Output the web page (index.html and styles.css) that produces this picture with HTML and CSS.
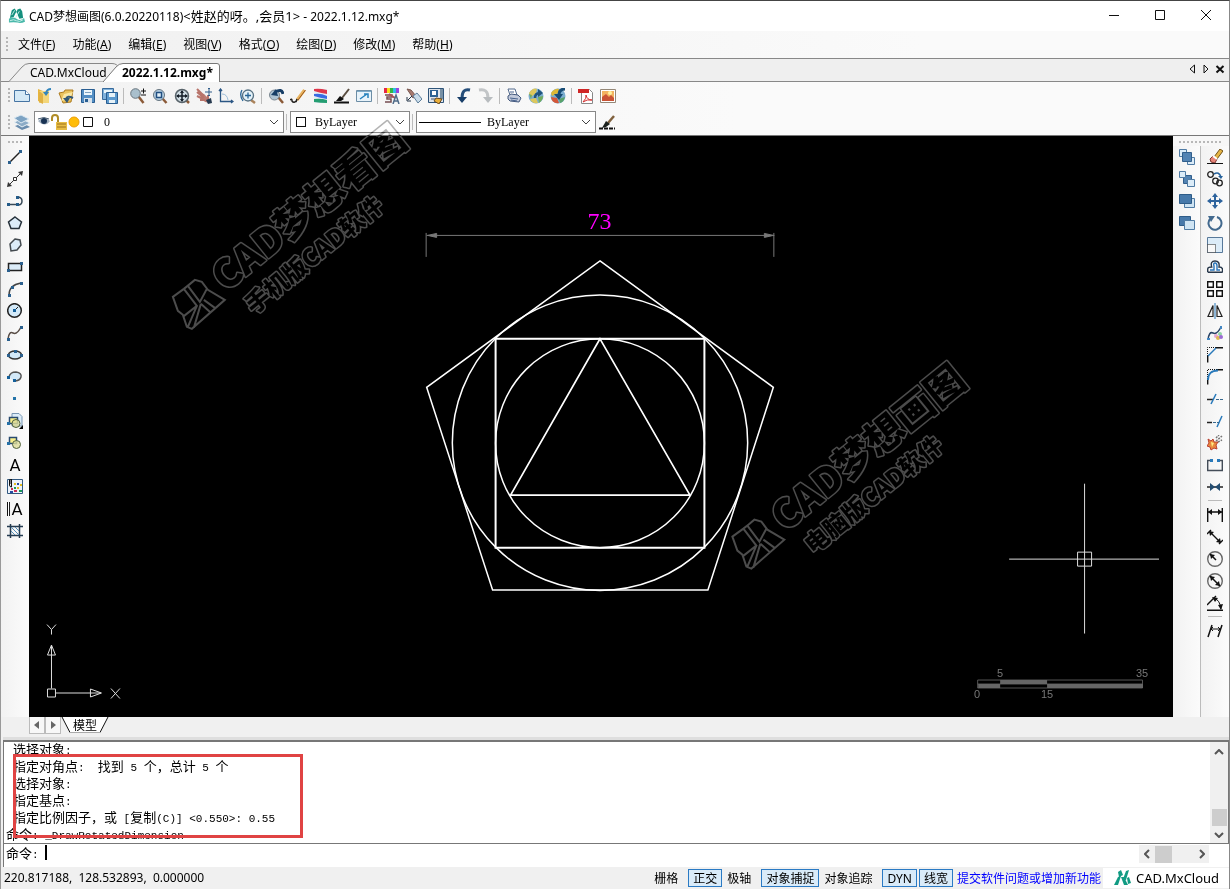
FILE: index.html
```html
<!DOCTYPE html>
<html lang="zh-CN">
<head>
<meta charset="utf-8">
<title>CAD梦想画图</title>
<link rel="stylesheet" href="styles.css">
</head>
<body>
<div class="window">
  <header class="titlebar">
    <svg class="app-logo" viewBox="0 0 18 18"><path d="M4 3l3-2 2 3-3 6-4 1zM10 2l3-1 2 3 1 7-4 1-3-7z" fill="#15907e"/><path d="M1 12q4-3 8 0t8-1l1 4q-4 2-8 1t-9 0z" fill="#49b8aa"/><path d="M4 8l3-5M8 11l4-7M2 14q4-2 7 0t7-1" stroke="#c9efe9"/></svg>
    <h1>CAD梦想画图(6.0.20220118)<span class="user">&lt;姓赵的呀。,会员1&gt;</span> - 2022.1.12.mxg*</h1>
    <div class="window-buttons">
      <button aria-label="最小化"><svg viewBox="0 0 12 12"><path d="M1 5.500h10"/></svg></button>
      <button aria-label="最大化"><svg viewBox="0 0 12 12"><path d="M1.500 .5h9v9h-9z"/></svg></button>
      <button aria-label="关闭"><svg viewBox="0 0 12 12"><path d="M1 0l10 10M11 0L1 10"/></svg></button>
    </div>
  </header>

  <nav class="menubar">
    <span class="grip"></span>
    <button>文件(<u>F</u>)</button>
    <button>功能(<u>A</u>)</button>
    <button>编辑(<u>E</u>)</button>
    <button>视图(<u>V</u>)</button>
    <button>格式(<u>O</u>)</button>
    <button>绘图(<u>D</u>)</button>
    <button>修改(<u>M</u>)</button>
    <button>帮助(<u>H</u>)</button>
  </nav>

  <div class="tabstrip">
    <button class="tab">
      <svg viewBox="0 0 112 19"><path d="M0 18.500L13 4Q16 .5 20 .5H103Q108 .5 110 5V18.500" fill="#f0f0f0" stroke="#888"/></svg>
      <span>CAD.MxCloud</span>
    </button>
    <button class="tab active">
      <svg viewBox="0 0 118 19"><path d="M0 19L13 4Q16 .5 20 .5H114Q116.500 .5 116.500 3V19" fill="#fff" stroke="#777"/></svg>
      <span>2022.1.12.mxg*</span>
    </button>
    <div class="tab-nav">
      <button aria-label="上一个"><svg viewBox="0 0 10 10"><path d="M7.500 1v8L3 5z"/></svg></button>
      <button aria-label="下一个"><svg viewBox="0 0 10 10"><path d="M3 1v8l4-4z"/></svg></button>
      <button aria-label="关闭标签"><svg viewBox="0 0 10 10"><path d="M1.500 2l7 6.500M8.500 2l-7 6.500" stroke-width="2"/></svg></button>
    </div>
  </div>

  <div class="toolbar">
    <span class="grip"></span>
    <button class="tool" aria-label="新建"><svg viewBox="0 0 16 16"><path d="M.5 2.500h11l4 4v7H.5z" fill="#d5e9f6" stroke="#4674a3"/><path d="M11.500 2.500v4h4" fill="#fff" stroke="#4674a3"/></svg></button>
    <button class="tool" aria-label="打开"><svg viewBox="0 0 16 16"><path d="M2 1l5 2v12l-5-2z" fill="#e8b53d"/><path d="M3 3h10v12H3z" fill="#f3d67a"/><path d="M3 3l4 3v10l-4-2z" fill="#dfb144"/><path d="M15 1q-4 0-5 4" stroke="#3285bd" stroke-width="2"/><path d="M7 4l6 0-3 4z" fill="#3285bd"/></svg></button>
    <button class="tool" aria-label="打开图纸"><svg viewBox="0 0 16 16"><path d="M1 5l5-1 1-2h8l-2 12-8 1z" fill="#e9c25d" stroke="#ad7b20"/><path d="M3 13l3-7 9-2-3 7z" fill="#fae7a3"/><path d="M15 10q-6-3-7 1" stroke="#315776" stroke-width="2"/><path d="M5 10l4 5 3-5z" fill="#315776"/></svg></button>
    <button class="tool" aria-label="保存"><svg viewBox="0 0 16 16"><path d="M1.500 1.500h13v13h-13z" fill="#548fc5" stroke="#285d91"/><path d="M4 2h8v5H4z" fill="#edf7fc"/><path d="M5 4.500h6" stroke="#7fa2c0"/><path d="M4 10h8v5H4z" fill="#d7e2eb"/><path d="M5 11h3v3H5z" fill="#285d91"/></svg></button>
    <button class="tool" aria-label="全部保存"><svg viewBox="0 0 16 16"><path d="M.5.5h11v11H.5z" fill="#7fb0da" stroke="#376a9c"/><path d="M2 2h8v3H2z" fill="#eaf5fa"/><path d="M4.500 4.500h11v11h-11z" fill="#5c99cd" stroke="#285d91"/><path d="M7 5h6v4H7zM7 12h6v3H7z" fill="#e7f2f8"/></svg></button>
    <span class="sep"></span>
    <button class="tool" aria-label="缩放"><svg viewBox="0 0 16 16"><path d="M8.500 8.500l5 6.500" stroke="#8b5a38" stroke-width="2.500"/><circle cx="5.500" cy="5.500" r="4.800" fill="#a9bfcc" stroke="#68747d"/><path d="M11 3h5M13.500.5v5M11 7h5" stroke="#111"/></svg></button>
    <button class="tool" aria-label="窗口缩放"><svg viewBox="0 0 16 16"><path d="M10 10l4.500 5" stroke="#8b5a38" stroke-width="2.500"/><circle cx="7" cy="7" r="5.500" fill="#b9d2e4" stroke="#66747f"/><path d="M4.500 4.500h5v5h-5z" fill="#e3f1f9" stroke="#204e80" stroke-width="1.500"/></svg></button>
    <button class="tool" aria-label="范围缩放"><svg viewBox="0 0 16 16"><path d="M12 12l3 3" stroke="#8b5a38" stroke-width="2.500"/><circle cx="8" cy="8" r="6.500" fill="#d0dce3" stroke="#59646b" stroke-width="1.500"/><path d="M8 3v10M3 8h10" stroke="#151e28" stroke-width="1.500"/><path d="M6 5l2-3 2 3zM6 11l2 3 2-3zM5 6L2 8l3 2zM11 6l3 2-3 2z" fill="#151e28"/></svg></button>
    <button class="tool" aria-label="平移"><svg viewBox="0 0 16 16"><path d="M4 5l4 1 3 3 3 6-5-1-4-4z" fill="#bd7c73"/><path d="M1 1l7 7M1 4l7 6M1 8l6 3M4 12l5 0M12 7l0 5" stroke="#b8746b" stroke-width="2"/><path d="M10 12l5-2 1 5-4 1z" fill="#26394f"/><path d="M13 0v8M9 4h7M12 1l1-1 1 1M12 7l1 1 1-1" stroke="#315d8a"/></svg></button>
    <button class="tool" aria-label="坐标系"><svg viewBox="0 0 16 16"><path d="M2.500 1v12.500H15M1 3l1.500-2L4 3M13 12l2 1.500-2 1.500" stroke="#2b5684" stroke-width="1.300"/><path d="M4 6q5 0 6 6" stroke="#9dbed9"/></svg></button>
    <button class="tool" aria-label="实时缩放"><svg viewBox="0 0 16 16"><path d="M11 12l4 3" stroke="#aa835b" stroke-width="2.500"/><circle cx="8" cy="7.500" r="5.500" fill="#e5f2f8" stroke="#567082" stroke-width="1.300"/><path d="M8 4.500v6M5 7.500h6M2 2q-3 5 1 11" stroke="#276495" stroke-width="1.300"/></svg></button>
    <span class="sep"></span>
    <button class="tool" aria-label="上一视图"><svg viewBox="0 0 16 16"><path d="M10 9l5 6" stroke="#8b5a38" stroke-width="2.500"/><circle cx="6.500" cy="7" r="5" fill="#aec3d2" stroke="#7b8790"/><path d="M15 6Q14 0 7 4" stroke="#173e66" stroke-width="3"/><path d="M3 7l5-6 2 7z" fill="#173e66"/></svg></button>
    <button class="tool" aria-label="画笔"><svg viewBox="0 0 16 16"><path d="M14.500 2L7 12" stroke="#e9b460" stroke-width="3"/><path d="M15.500 2L8 12" stroke="#985519"/><path d="M0 12q2-2 2 1 2 3 5-1M7 11l-1 3" stroke="#23201e" stroke-width="1.500"/></svg></button>
    <button class="tool" aria-label="颜色"><svg viewBox="0 0 16 16"><path d="M2 1h13v14H2z" fill="#e6edf3"/><path d="M2 1q5-1 13 1v4Q8 5 2 3z" fill="#df374b"/><path d="M2 6q7-1 13 2v3Q8 10 2 8z" fill="#386be2"/><path d="M2 11q7-1 13 1v3Q8 15 2 14z" fill="#259e72"/></svg></button>
    <button class="tool" aria-label="线宽"><svg viewBox="0 0 16 16"><path d="M15 1L8 10" stroke="#594d40" stroke-width="2"/><path d="M6 8l4 3-3 2H2z" fill="#111"/><path d="M0 14.500h15" stroke="#111" stroke-width="2"/></svg></button>
    <button class="tool" aria-label="全屏"><svg viewBox="0 0 16 16"><path d="M.5 2.500h15v11H.5z" fill="#e8f3fa" stroke="#6c8da5"/><path d="M1 3.500h14" stroke="#7eabc8"/><path d="M4 11l7-5M8 6h4v4" stroke="#2582bd" stroke-width="1.500"/></svg></button>
    <span class="sep"></span>
    <button class="tool" aria-label="文字样式"><svg viewBox="0 0 16 16"><path d="M0 0h3v5H0z" fill="#e82745"/><path d="M3 0h3v5H3z" fill="#f5df1b"/><path d="M6 0h3v5H6z" fill="#31b546"/><path d="M9 0h3v5H9z" fill="#2dbfe3"/><path d="M12 0h3v5h-3z" fill="#9544e0"/><path d="M1 7h7v2H3v2h4v3H1" stroke="#754e51" stroke-width="1.500"/><path d="M5 6l6 4" stroke="#ac5056" stroke-width="2"/><path d="M9 16l3-9 3 9M10 13h4" stroke="#4f6b88" stroke-width="1.500"/></svg></button>
    <button class="tool" aria-label="测量"><svg viewBox="0 0 16 16"><path d="M1 1l4 1 5 6-3 2z" fill="#a97b70" stroke="#78564e"/><path d="M7 8l4-3 5 6-4 4z" fill="#c9dcea" stroke="#5c7d99"/><path d="M6 8l-4 4M1 9v4h4" stroke="#203246"/></svg></button>
    <button class="tool" aria-label="图块"><svg viewBox="0 0 16 16"><path d="M.5.5h15v14H.5z" fill="#dfe5ec" stroke="#2f557a"/><path d="M2 2h8v7H2z" fill="#2d6293"/><path d="M4 3h4v4H4z" fill="#fff"/><path d="M12 1h3v10h-3z" fill="#7790a5"/><path d="M3 11h4" stroke="#456"/><path d="M8 10l6 1-3 5-5-3z" fill="#eab03b" stroke="#664620"/></svg></button>
    <span class="sep"></span>
    <button class="tool" aria-label="撤销"><svg viewBox="0 0 16 16"><path d="M14 2Q6 0 6 10" stroke="#254e7a" stroke-width="3"/><path d="M1 9h10l-5 6z" fill="#173d68"/></svg></button>
    <button class="tool" aria-label="重做"><svg viewBox="0 0 16 16"><path d="M1 2q9-2 9 8" stroke="#c2c5c7" stroke-width="3"/><path d="M15 9H5l5 6z" fill="#b8bcbf"/></svg></button>
    <span class="sep"></span>
    <button class="tool" aria-label="打印"><svg viewBox="0 0 16 16"><path d="M4 7L2 1l7 0 2 6" fill="#fff" stroke="#536a8d"/><path d="M2 8l3-2 7 1 3 3-2 4-9-1-2-2z" fill="#c2cadb" stroke="#44597d"/><path d="M4 10l8 1M5 12l6 1M4 4l4 0" stroke="#46618c"/></svg></button>
    <button class="tool" aria-label="上传云端"><svg viewBox="0 0 16 16"><circle cx="8" cy="8" r="7.500" fill="#7baed0"/><path d="M1 5q4-6 8-4L8 5 3 9zM2 11l6-1 2 5Q4 16 2 11z" fill="#ddc85c"/><path d="M10 9l5-1q0 4-4 7zM1 6l3 1-1 4z" fill="#72ac5c"/><path d="M7 10q0-5 5-5" stroke="#20557e" stroke-width="2.500"/><path d="M10 1l5 4-5 4z" fill="#20557e"/></svg></button>
    <button class="tool" aria-label="云端下载"><svg viewBox="0 0 16 16"><circle cx="8" cy="8" r="7.500" fill="#7baed0"/><path d="M1 5q4-5 8-4l-1 4-6 3z" fill="#deb936"/><path d="M1 9l6 1 2 5q-7 1-8-6z" fill="#d55739"/><path d="M9 11l6-2q-1 5-5 6z" fill="#5aa36a"/><path d="M15 1Q9 1 9 7" stroke="#194d76" stroke-width="3"/><path d="M4 6h9l-4 6z" fill="#194d76"/></svg></button>
    <span class="sep"></span>
    <button class="tool" aria-label="导出PDF"><svg viewBox="0 0 16 16"><path d="M3.500 1.500h8l3 3v11h-11z" fill="#fff" stroke="#888"/><path d="M0 1h11v4H0z" fill="#cf2626"/><path d="M5 14q4-4 3-7 1 5 6 5-5-1-9 2z" stroke="#d43030"/></svg></button>
    <button class="tool" aria-label="导出图片"><svg viewBox="0 0 16 16"><path d="M.5 1.500h15v13H.5z" fill="#fff" stroke="#948777"/><path d="M2 3h12v10H2z" fill="#f3b360"/><path d="M2 9l4-3 3 3 2-2 3 3v3H2z" fill="#c95335"/><circle cx="10" cy="5" r="2" fill="#fff2a0"/></svg></button>
  </div>

  <div class="toolbar properties">
    <span class="grip"></span>
    <button class="tool" aria-label="图层管理"><svg viewBox="0 0 16 16"><path d="M1 12l8-3 7 4-8 3z" fill="#698cad"/><path d="M0 8l8-3 8 4-8 4z" fill="#8cacc7" stroke="#e8f0f5"/><path d="M0 4l7-3 8 4-8 4z" fill="#7da3c3" stroke="#dce9f2"/></svg></button>
    <label class="combo layer">
      <svg class="layer-icons" viewBox="0 0 62 18"><path d="M1 8q6-6 12 0-5 7-12 0z" fill="#a4b2c0"/><circle cx="7" cy="8" r="3" fill="#183253"/><path d="M1 6q6-3 11 0" stroke="#42566b"/><path d="M15 8V5q0-3 3-3t3 3v5" stroke="#b08c26" stroke-width="2"/><path d="M19 9h11v8H19z" fill="#e8bd44"/><path d="M20 11h9M20 14h9" stroke="#9d731c"/><circle cx="37" cy="9" r="5" fill="#ffbd09" stroke="#ee9f08"/><path d="M46.500 4.500h9v9h-9z" fill="#fff" stroke="#111"/></svg>
      <select aria-label="图层"><option>0</option></select>
      <svg class="chevron" viewBox="0 0 10 6"><path d="M1 1l4 4 4-4"/></svg>
    </label>
    <span class="sep"></span>
    <label class="combo color">
      <span class="swatch"></span>
      <select aria-label="颜色"><option>ByLayer</option></select>
      <svg class="chevron" viewBox="0 0 10 6"><path d="M1 1l4 4 4-4"/></svg>
    </label>
    <span class="sep"></span>
    <label class="combo linetype">
      <span class="line-sample"></span>
      <select aria-label="线型"><option>ByLayer</option></select>
      <svg class="chevron" viewBox="0 0 10 6"><path d="M1 1l4 4 4-4"/></svg>
    </label>
    <button class="tool" aria-label="线宽设置"><svg viewBox="0 0 16 16"><path d="M15 2L9 9" stroke="#80613e" stroke-width="2.500"/><path d="M7 7l4 3-4 3-4 1z" fill="#1b211d"/><path d="M0 14.500h16" stroke="#111" stroke-width="2" stroke-dasharray="4 1"/></svg></button>
  </div>

  <main class="workspace">
    <aside class="rail">
      <span class="grip-h"></span>
      <button class="tool" aria-label="直线"><svg viewBox="0 0 16 16"><path d="M2 14L14 2" stroke="#222" stroke-width="1.500"/><path d="M1 12h3v3H1zM12 1h3v3h-3z" fill="#2b608e"/></svg></button>
      <button class="tool" aria-label="构造线"><svg viewBox="0 0 16 16"><path d="M1 15L15 1" stroke="#333"/><path d="M0 16l1-5 4 4zM16 0l-5 1 4 4z" fill="#333"/><path d="M6.500 6.500h3v3h-3z" fill="#fff" stroke="#333"/></svg></button>
      <button class="tool" aria-label="多段线"><svg viewBox="0 0 16 16"><path d="M2 11.500h9M10 4q5 0 5 4t-4 4" stroke="#384957" stroke-width="1.500"/><path d="M0 10h3v3H0zM9 10h3v3H9zM9 3h3v3H9z" fill="#245b88"/></svg></button>
      <button class="tool" aria-label="正多边形"><svg viewBox="0 0 16 16"><path d="M8 2l6.500 5-2.500 6.500H4L1.500 7z" fill="#dcecf8" stroke="#26313a" stroke-width="1.500"/></svg></button>
      <button class="tool" aria-label="多边形"><svg viewBox="0 0 16 16"><path d="M8 2l5 1 1 5-4 5-6 1-1-7z" fill="#dcecf8" stroke="#444b50" stroke-width="1.500"/></svg></button>
      <button class="tool" aria-label="矩形"><svg viewBox="0 0 16 16"><path d="M1.500 4.500h13v7h-13z" fill="#dcecf8" stroke="#222" stroke-width="1.500"/><path d="M0 10h3v3H0zM13 3h3v3h-3z" fill="#2b608e"/></svg></button>
      <button class="tool" aria-label="圆弧"><svg viewBox="0 0 16 16"><path d="M2 14q0-10 12-12" stroke="#444" stroke-width="1.500"/><path d="M1 13h3v3H1zM4 5h3v3H4zM13 1h3v3h-3z" fill="#2b608e"/></svg></button>
      <button class="tool" aria-label="圆"><svg viewBox="0 0 16 16"><circle cx="7.500" cy="7.500" r="6.800" fill="#d3e9f8" stroke="#222" stroke-width="1.500"/><path d="M7 8l4-4" stroke="#222"/><path d="M6 6h3v3H6z" fill="#15609a"/></svg></button>
      <button class="tool" aria-label="样条曲线"><svg viewBox="0 0 16 16"><path d="M1 14q1-8 5-6t8-6" stroke="#594d46" stroke-width="1.500"/><path d="M0 13h3v3H0zM13 1h3v3h-3z" fill="#2b608e"/></svg></button>
      <button class="tool" aria-label="椭圆"><svg viewBox="0 0 16 16"><ellipse cx="8" cy="8" rx="6.500" ry="4" fill="#d3e9f8" stroke="#333" stroke-width="1.500"/><path d="M0 7h3v3H0zM13 7h3v3h-3zM7 3h3v3H7z" fill="#2b608e"/></svg></button>
      <button class="tool" aria-label="椭圆弧"><svg viewBox="0 0 16 16"><path d="M2 8q1-5 7-5 6 1 5 5-1 4-7 4" fill="#d3e9f8" stroke="#555" stroke-width="1.500"/><path d="M0 7h3v3H0zM6 10h3v3H6z" fill="#15609a"/></svg></button>
      <button class="tool" aria-label="点"><svg viewBox="0 0 16 16"><path d="M6 6h3v3H6z" fill="#2474a9"/></svg></button>
      <button class="tool" aria-label="插入块"><svg viewBox="0 0 16 16"><path d="M5 .5h7l3 3V13H5z" fill="#dcecf8" stroke="#7795b2"/><path d="M2.500 4.500h8v6h-8z" fill="#faf08b" stroke="#294b70" stroke-width="1.500"/><circle cx="9" cy="10.500" r="4" fill="#dedd9a" fill-opacity=".8" stroke="#51623f"/><path d="M0 9h3v3H0z" fill="#2771a7"/><path d="M16 12v4h-4z" fill="#000"/></svg></button>
      <button class="tool" aria-label="创建块"><svg viewBox="0 0 16 16"><path d="M2.500 2.500h7v6h-7z" fill="#faf08b" stroke="#294b70" stroke-width="1.500"/><circle cx="9.500" cy="9.500" r="4" fill="#dedd9a" fill-opacity=".8" stroke="#51623f"/><path d="M0 7h3v3H0z" fill="#2771a7"/></svg></button>
      <button class="tool" aria-label="文字"><span class="letter">A</span></button>
      <button class="tool" aria-label="填充"><svg viewBox="0 0 16 16"><path d="M.5 .5h15v14H.5z" fill="#eef3fb" stroke="#31587f"/><path d="M2.500 1v5q0 2 2 2V0H3v5" stroke="#111"/><path d="M7 4h2v2H7zM10 8h2v2h-2zM13 5h2v2h-2z" fill="#e4bd20"/><path d="M7 8h2v2H7zM12 11h3v2h-3z" fill="#1a9b58"/><path d="M4 9h2v2H4zM7 11h3v2H7z" fill="#c82e56"/><path d="M10 4h2v2h-2zM3 12h3v2H3z" fill="#274ba3"/></svg></button>
      <button class="tool" aria-label="多行文字"><span class="letter mtext">A</span></button>
      <button class="tool" aria-label="图案填充"><svg viewBox="0 0 16 16"><path d="M3.500 1v14M12.500 1v14M0 3.500h16M0 12.500h16" stroke="#243b50" stroke-width="1.500"/><path d="M4 8l4 4M4 4l8 8M8 4l4 4" stroke="#538db7"/></svg></button>
    </aside>

    <section class="canvas">
      <svg class="drawing" viewBox="29 136 1145 582">
        <g class="watermark">
          <path d="M173 297l11-8 5-4 6-5 7 2 6 8 17 10-33 29-5-2-4-12-5-4zM184 289l13 17-14 11M188 286l12 16 7-13M197 306l-9 21M201 304l-7 24M201 304l10 9M204 300l11 8"/>
          <g transform="translate(226 293) rotate(-39)"><text class="wm-large">CAD梦想看图</text></g>
          <g transform="translate(254 315) rotate(-39)"><text class="wm-small">手机版CAD软件</text></g>
        </g>
        <g class="watermark" transform="translate(560 240)">
          <path d="M173 297l11-8 5-4 6-5 7 2 6 8 17 10-33 29-5-2-4-12-5-4zM184 289l13 17-14 11M188 286l12 16 7-13M197 306l-9 21M201 304l-7 24M201 304l10 9M204 300l11 8"/>
          <g transform="translate(226 293) rotate(-39)"><text class="wm-large">CAD梦想画图</text></g>
          <g transform="translate(254 315) rotate(-39)"><text class="wm-small">电脑版CAD软件</text></g>
        </g>
        <g stroke="#fff" stroke-width="1.500">
          <path d="M600.500 261L774 387.500 708.500 590.500H493L427 387.500z"/>
          <circle cx="600.500" cy="443" r="147.800"/>
          <path d="M496 339h209v209H496z" stroke-width="2"/>
          <circle cx="600.500" cy="443.500" r="104.500"/>
          <path d="M600.500 339L690.500 495.500H511z" stroke-width="1.700"/>
        </g>
        <g stroke="#777">
          <path d="M426.500 233v24M774.500 233v24M427 235.500h348"/>
          <path d="M428 235.500l9-2v4zM774 235.500l-9-2v4z" fill="#777"/>
        </g>
        <text class="dimension" x="600" y="229">73</text>
        <g stroke="#ddd">
          <path d="M1085.500 484v150M1010 559.500h150M1078.500 552.500h14v14h-14z"/>
          <path d="M47.500 689.500h8v8h-8zM51.500 689V646M47.500 655.500l4-10 4 10zM56 693.500h45M90.500 689.500l11 4-11 4z"/>
          <path d="M47 625l4.500 5v5M56 625l-4.500 5M111 689l9 10M120 689l-9 10"/>
        </g>
        <path d="M978.500 680.500h165v8h-165zM978 684.500h166" stroke="#555"/>
        <path d="M979 686.500h22M1001 682.500h47M1048 686.500h96" stroke="#666" stroke-width="4"/>
        <g class="scale"><text x="1001" y="677">5</text><text x="1143" y="677">35</text><text x="978" y="699">0</text><text x="1048" y="699">15</text></g>
      </svg>
    </section>

    <aside class="dock">
      <span class="grip-h"></span>
      <div class="dock-columns">
        <div class="rail order">
          <button class="tool" aria-label="前置"><svg viewBox="0 0 16 16"><path d="M.5.5h7v7h-7zM8.500 8.500h7v7h-7z" fill="#dcecf8" stroke="#4f7ba4"/><path d="M3.500 3.500h9v9h-9z" fill="#5283b3" stroke="#315f8c"/></svg></button>
          <button class="tool" aria-label="后置"><svg viewBox="0 0 16 16"><path d="M4.500 4.500h8v8h-8z" fill="#5283b3" stroke="#315f8c"/><path d="M.5.5h6v6h-6zM8.500 8.500h7v7h-7z" fill="#dcecf8" stroke="#4f7ba4"/></svg></button>
          <button class="tool" aria-label="置于对象之上"><svg viewBox="0 0 16 16"><path d="M5.500 5.500h10v9h-10z" fill="#cfe4f3" stroke="#4f7ba4"/><path d="M.5 1.500h12v9H.5z" fill="#4779aa" stroke="#2e5c88"/></svg></button>
          <button class="tool" aria-label="置于对象之下"><svg viewBox="0 0 16 16"><path d="M.5 1.500h11v9H.5z" fill="#4779aa" stroke="#2e5c88"/><path d="M5.500 5.500h10v9h-10z" fill="#cfe4f3" stroke="#4f7ba4"/></svg></button>
        </div>
        <div class="rail modify">
          <button class="tool" aria-label="删除"><svg viewBox="0 0 16 16"><path d="M7 8l6-8 3 2-6 8z" fill="#e6b544" stroke="#715218"/><path d="M3 10l3-3 4 3-2 4-4-1z" fill="#e78478" stroke="#7d3731"/><path d="M6 7l4 3" stroke="#fff" stroke-width="2"/><path d="M0 14.500h16" stroke="#111"/></svg></button>
          <button class="tool" aria-label="复制"><svg viewBox="0 0 16 16"><circle cx="3.500" cy="3.500" r="2.800" stroke="#222" stroke-width="1.300"/><circle cx="8.500" cy="10" r="2.800" stroke="#222" stroke-width="1.300"/><circle cx="12.500" cy="12" r="2.800" stroke="#222" stroke-width="1.300"/><path d="M7 3q5-3 7 3" stroke="#25619a" stroke-width="1.500"/><path d="M11 5h5l-2 3z" fill="#25619a"/></svg></button>
          <button class="tool" aria-label="移动"><svg viewBox="0 0 16 16"><path d="M8 2v12M2 8h12" stroke="#2d639d" stroke-width="2"/><path d="M8 0l3 4H5zM8 16l-3-4h6zM0 8l4-3v6zM16 8l-4 3V5z" fill="#2d639d"/></svg></button>
          <button class="tool" aria-label="旋转"><svg viewBox="0 0 16 16"><path d="M3 4a6.500 6.500 0 1 0 7-2" stroke="#42698e" stroke-width="2"/><path d="M1 1h7L4 7z" fill="#42698e"/></svg></button>
          <button class="tool" aria-label="缩放对象"><svg viewBox="0 0 16 16"><path d="M.5.5h15v15H.5z" fill="#dcecf8" stroke="#58799a"/><path d="M.5 7.500h8v8h-8z" fill="#f8f8f8" stroke="#222" stroke-dasharray="1 1"/></svg></button>
          <button class="tool" aria-label="偏移"><svg viewBox="0 0 16 16"><path d="M.7 13.300h15M.7 13V10q0-2 4-2Q3 2 8 2t4 6q3 0 3.500 2v3" stroke="#27374a" stroke-width="1.400"/><path d="M3 11h4V7Q6 4 8 4t2 3v4h3" stroke="#2a75ba" stroke-width="1.400"/></svg></button>
          <button class="tool" aria-label="阵列"><svg viewBox="0 0 16 16"><path d="M.7.700h5.600v5.600H.7zM9.700.700h5.600v5.600H9.700zM.7 9.700h5.600v5.600H.7zM9.700 9.700h5.600v5.600H9.700z" fill="#fff" stroke="#111" stroke-width="1.400"/></svg></button>
          <button class="tool" aria-label="镜像"><svg viewBox="0 0 16 16"><path d="M6 2.500v11H1zM10 2.500v11h5z" stroke="#222" stroke-width="1.200"/><path d="M8 0v16" stroke="#2879ba"/></svg></button>
          <button class="tool" aria-label="编辑曲线"><svg viewBox="0 0 16 16"><path d="M1 15q1-9 5-7t8-6" stroke="#294265" stroke-width="1.500"/><path d="M0 14h3M14 1v3" stroke="#4387c3" stroke-width="2"/><circle cx="9" cy="11" r="2" fill="#e8a3cf"/><circle cx="13" cy="9" r="2" fill="#91d4a4"/><circle cx="11" cy="13" r="2" fill="#e1b84f"/><circle cx="14" cy="12" r="2" fill="#9b6bd3"/></svg></button>
          <button class="tool" aria-label="倒角"><svg viewBox="0 0 16 16"><path d="M.7 15.500V9M9 .7h7" stroke="#111" stroke-width="1.400"/><path d="M.5 9V.5H9" stroke="#111" stroke-dasharray="1 1"/><path d="M1 9l8-8" stroke="#2879ba" stroke-width="1.500"/></svg></button>
          <button class="tool" aria-label="圆角"><svg viewBox="0 0 16 16"><path d="M.7 15.500V10M10 .7h6" stroke="#111" stroke-width="1.400"/><path d="M.5 10V.5H10" stroke="#111" stroke-dasharray="1 1"/><path d="M1 11Q1 1.500 11 1.500" stroke="#2879ba" stroke-width="1.800"/></svg></button>
          <button class="tool" aria-label="修剪"><svg viewBox="0 0 16 16"><path d="M0 8.500h6" stroke="#222" stroke-width="1.500"/><path d="M4 13L9 3" stroke="#2879ba" stroke-width="1.500"/><path d="M9 8.500h7" stroke="#38698f" stroke-dasharray="3 1"/></svg></button>
          <button class="tool" aria-label="延伸"><svg viewBox="0 0 16 16"><path d="M0 9.500h5" stroke="#222" stroke-width="1.500"/><path d="M10 14l5-11" stroke="#2879ba" stroke-width="1.500"/><path d="M6 9.500h6" stroke="#38698f" stroke-dasharray="3 1"/></svg></button>
          <button class="tool" aria-label="分解"><svg viewBox="0 0 16 16"><path d="M1 4l3 2 2-2 1 3 4 0-2 3 1 4-3-1-3 2-1-3-3-1 2-3z" fill="#e9893d" stroke="#b94032"/><path d="M4 7l3 1-2 4z" fill="#ffec83"/><path d="M9 6l6-5M11 7l4-2M9 3l3-3" stroke="#777" stroke-width="1.500" stroke-dasharray="2 1"/></svg></button>
          <button class="tool" aria-label="打断"><svg viewBox="0 0 16 16"><path d="M3 3.500H.7v10h14.600v-10H13" stroke="#444d58" stroke-width="1.400"/><path d="M3 2h3v3H3zM10 2h3v3h-3z" fill="#2879ba"/></svg></button>
          <button class="tool" aria-label="合并"><svg viewBox="0 0 16 16"><path d="M0 8h16" stroke="#222" stroke-width="1.500"/><path d="M3 4l5 4-5 4zM13 4L8 8l5 4z" fill="#234c70"/></svg></button>
          <span class="sep-h"></span>
          <button class="tool" aria-label="线性标注"><svg viewBox="0 0 16 16"><path d="M.7 1v14M15.300 1v14M1 5h14" stroke="#111" stroke-width="1.400"/><path d="M1 5l4-3v6zM15 5l-4-3v6z" fill="#111"/></svg></button>
          <button class="tool" aria-label="对齐标注"><svg viewBox="0 0 16 16"><path d="M0 5l4-4M12 15l4-4M3 3l10 10" stroke="#111" stroke-width="1.400"/><path d="M2 2l5 1-4 4zM14 14l-5-1 4-4z" fill="#111"/></svg></button>
          <button class="tool" aria-label="半径标注"><svg viewBox="0 0 16 16"><circle cx="8" cy="8" r="7.300" stroke="#666" stroke-width="1.400"/><path d="M3 3l6 6" stroke="#111" stroke-width="1.500"/><path d="M3 3l5 1-4 4z" fill="#111"/></svg></button>
          <button class="tool" aria-label="直径标注"><svg viewBox="0 0 16 16"><circle cx="8" cy="8" r="7.300" stroke="#666" stroke-width="1.400"/><path d="M3 3l10 10" stroke="#111" stroke-width="1.500"/><path d="M3 3l5 1-4 4zM13 13l-5-1 4-4z" fill="#111"/></svg></button>
          <button class="tool" aria-label="角度标注"><svg viewBox="0 0 16 16"><path d="M0 10L9 1M0 15.300h16" stroke="#111" stroke-width="1.400"/><path d="M7 3q6 2 7 11" stroke="#111"/><path d="M5 2l6 1-3 4zM11 10l5-1-2 6z" fill="#111"/></svg></button>
          <span class="sep-h"></span>
          <button class="tool" aria-label="标注样式"><svg viewBox="0 0 16 16"><path d="M1 14L5 2M11 14l4-12" stroke="#111" stroke-width="1.500"/><path d="M4 6h9M6 4L4 6l2 2M11 4l2 2-2 2" stroke="#111"/></svg></button>
        </div>
      </div>
    </aside>
  </main>

  <div class="sheetbar">
    <button class="sheet-arrow" aria-label="上一布局"><svg viewBox="0 0 8 10"><path d="M6 1v8L1 5z"/></svg></button>
    <button class="sheet-arrow" aria-label="下一布局"><svg viewBox="0 0 8 10"><path d="M2 1v8l5-4z"/></svg></button>
    <button class="sheet"><svg viewBox="0 0 48 16"><path d="M1 0l8 15.500h30L47 0z" fill="#fff"/><path d="M1 0l8 15.500M39 15.500L47 0" stroke="#111"/><path d="M9 15.500h30" stroke="#aaa"/></svg><span>模型</span></button>
  </div>

  <section class="command">
    <div class="history">
      <div class="lines">
        <p class="indent"><b>选择对象</b>:</p>
        <p class="indent"><b>指定对角点</b>:&nbsp; <b>找到</b> 5 <b>个，总计</b> 5 <b>个</b></p>
        <p class="indent"><b>选择对象</b>:</p>
        <p class="indent"><b>指定基点</b>:</p>
        <p class="indent"><b>指定比例因子，或</b> [<b>复制</b>(C)] &lt;0.550&gt;: 0.55</p>
        <p><b>命令</b>: _DrawRotatedDimension</p>
      </div>
      <div class="vscroll"><svg viewBox="0 0 10 6"><path d="M1 5l4-4 4 4"/></svg><span class="thumb"></span><svg viewBox="0 0 10 6"><path d="M1 1l4 4 4-4"/></svg></div>
      <span class="highlight"></span>
    </div>
    <div class="prompt">
      <label for="cmd"><b>命令</b>:</label>
      <span class="caret"></span>
      <input id="cmd" type="text">
      <div class="hscroll"><svg viewBox="0 0 6 10"><path d="M5 1L1 5l4 4"/></svg><span class="thumb"></span><svg viewBox="0 0 6 10"><path d="M1 1l4 4-4 4"/></svg></div>
    </div>
  </section>

  <footer class="statusbar">
    <output>220.817188,&nbsp; 128.532893,&nbsp; 0.000000</output>
    <div class="modes">
      <button>栅格</button>
      <button class="on">正交</button>
      <button>极轴</button>
      <button class="on">对象捕捉</button>
      <button>对象追踪</button>
      <button class="on">DYN</button>
      <button class="on">线宽</button>
    </div>
    <a class="feedback" href="#">提交软件问题或增加新功能</a>
    <div class="brand"><svg viewBox="0 0 18 16"><path d="M4 2l3-2 2 5-4 2zM9 9l3-8 3-1-3 10zM0 15l4-8 3-1-3 9zM7 7l3 0 4 8h-4zM13 8l2-1 2 6-3 1z" fill="#119b83"/></svg><span>CAD.MxCloud</span></div>
  </footer>
</div>
</body>
</html>
```
FILE: styles.css
```css
* { box-sizing: border-box; }
body { margin: 0; font: 12px/16px "Noto Sans", "Noto Sans CJK SC", sans-serif; color: #000; background: #f0f0f0; }
button { border: 0; padding: 0; margin: 0; background: none; font: inherit; color: inherit; }
svg { fill: none; display: block; flex: none; }
.window { min-height: 100vh; display: flex; flex-direction: column; border-top: 1px solid #444; border-right: 1px solid #888; border-bottom: 1px solid #555; border-left: 1px solid #999; }

.titlebar { height: 30px; display: flex; align-items: center; padding-left: 7px; gap: 4px; background: #fff; }
.titlebar h1 { margin: 0; font-size: 12px; font-weight: 400; flex: 1; }
.titlebar .user { font-size: 13px; }
.app-logo { width: 17px; height: 18px; }
.window-buttons { display: flex; }
.window-buttons button { width: 46px; height: 30px; display: grid; place-items: center; }
.window-buttons svg { width: 12px; height: 12px; stroke: #111; }

.menubar { height: 27px; display: flex; align-items: center; gap: 17px; background: linear-gradient(90deg, #f0f0f0, #fafafa 75%); padding-left: 5px; }
.menubar .grip { margin-right: -8px; }
.menubar u { text-underline-offset: 1px; }
.grip { width: 3px; height: 15px; flex: none; background: repeating-linear-gradient(#b5b5b5 0 2px, transparent 2px 4px); background-size: 2px 100%; background-repeat: no-repeat; }

.tabstrip { height: 24px; display: flex; align-items: flex-end; padding-left: 8px; border-top: 1px solid #888; border-bottom: 1px solid #888; background: #efefef; }
.tab { position: relative; height: 19px; width: 112px; padding-left: 21px; text-align: left; flex: none; margin-bottom: -1px; }
.tab svg { position: absolute; left: 0; top: 0; height: 19px; }
.tab span { position: relative; }
.tab.active { width: 118px; margin-left: -18px; padding-left: 19px; font-weight: 700; }
.tab-nav { display: flex; gap: 4px; margin: 0 4px 7px auto; }
.tab-nav svg { width: 10px; height: 10px; stroke: #111; }

.toolbar { display: flex; align-items: center; height: 27px; padding-left: 7px; background: linear-gradient(90deg, #f2f2f2, #fafafa 60%); }
.tool { width: 22px; height: 22px; display: grid; place-items: center; flex: none; }
.tool svg { width: 16px; height: 16px; }
.sep { width: 6px; height: 16px; flex: none; background: linear-gradient(90deg, transparent 2px, #bbb 2px 3px, transparent 3px); }
.properties { border-bottom: 1px solid #777; }
.combo { height: 22px; display: flex; align-items: center; gap: 5px; padding: 0 4px 0 2px; border: 1px solid #888; background: #fff; }
.layer { width: 250px; margin-left: 1px; }
.color { width: 120px; padding-left: 5px; gap: 9px; }
.linetype { width: 180px; gap: 6px; }
.combo select { flex: 1; min-width: 0; appearance: none; border: 0; padding: 0; background: none; color: #000; font: 12px/16px "Liberation Serif", serif; }
.chevron { width: 10px; height: 6px; stroke: #444; }
.layer-icons { width: 62px; height: 18px; }
.swatch { width: 10px; height: 10px; border: 1px solid #111; }
.line-sample { width: 62px; height: 1px; background: #000; }

.workspace { flex: 1; display: flex; }
.rail { width: 28px; flex: none; display: flex; flex-direction: column; align-items: center; background: linear-gradient(90deg, #f2f2f2, #fbfbfb); }
.grip-h { width: 14px; height: 2px; margin: 5px 0 3px; background: repeating-linear-gradient(90deg, #b8b8b8 0 2px, transparent 2px 4px); }
.dock { width: 56px; flex: none; display: flex; flex-direction: column; background: #f7f7f7; }
.dock .grip-h { width: auto; margin: 5px 6px 3px; }
.dock-columns { flex: 1; display: flex; }
.rail.order { width: 27px; }
.rail.modify { width: 29px; border-left: 1px solid #bbb; }
.sep-h { width: 14px; height: 1px; margin: 2px 0 3px; background: #bbb; }
.letter { font: 17px/20px Roboto, sans-serif; }
.mtext { border-left: 1px solid #111; box-shadow: inset 1px 0 #fff, inset 2px 0 #222; padding-left: 3px; line-height: 14px; }
.canvas { flex: 1; min-width: 0; display: flex; background: #000; }
.drawing { width: 100%; overflow: visible; mix-blend-mode: difference; pointer-events: none; }
.watermark { stroke: #4c4c4c; stroke-width: 2; }
.watermark text { font-family: "Noto Sans CJK SC", sans-serif; font-weight: 900; fill: #000; stroke-width: 3; paint-order: stroke; stroke-linejoin: round; }
.watermark .wm-large { font-size: 39px; }
.watermark .wm-small { font-size: 24px; }
.dimension { font: 24px "Liberation Serif", serif; fill: #f0f; text-anchor: middle; }
.scale { font: 11px "Liberation Sans", sans-serif; fill: #777; text-anchor: middle; }

.sheetbar { height: 20px; padding-left: 28px; display: flex; align-items: flex-start; background: #f0f0f0; }
.sheet-arrow { width: 16px; height: 17px; display: grid; place-items: center; border: 1px solid #bbb; border-top: 0; background: #f7f7f7; }
.sheet-arrow svg { width: 8px; height: 10px; fill: #666; }
.sheet { position: relative; width: 48px; height: 17px; display: grid; place-items: center; }
.sheet svg { position: absolute; left: 0; top: 0; width: 48px; height: 16px; }
.sheet span { position: relative; }

.command { margin-left: 2px; border-top: 3px solid #dedede; }
.command, .prompt label { font: 11px/17px "Liberation Mono", "Noto Sans CJK SC", monospace; }
.command b { font: 13px/17px "Noto Sans CJK SC", sans-serif; font-weight: 400; }
.history { position: relative; height: 104px; display: flex; border: 1px solid #777; border-top-width: 2px; background: #fff; }
.lines { flex: 1; display: flex; flex-direction: column; justify-content: flex-end; overflow: hidden; padding: 0 0 1px 2px; }
.lines p { margin: 0; height: 17px; flex: none; white-space: nowrap; }
.lines .indent { padding-left: 7px; }
.highlight { position: absolute; left: 9px; top: 12px; width: 290px; height: 84px; border: 3px solid #e04343; }
.vscroll { width: 18px; background: #f0f0f0; display: flex; flex-direction: column; align-items: center; padding: 7px 0 5px; gap: 6px; }
.vscroll svg { width: 10px; height: 6px; stroke: #555; stroke-width: 2; }
.vscroll .thumb { width: 15px; height: 17px; margin-top: auto; background: #cdcdcd; }
.prompt { height: 23px; display: flex; align-items: flex-start; padding-left: 2px; background: #fff; border-left: 1px solid #777; }
.caret { width: 2px; height: 15px; margin: 1px 0 0 6px; background: #000; }
.prompt input { flex: 1; min-width: 0; border: 0; padding: 0; outline: 0; background: none; font: inherit; }
.hscroll { width: 70px; height: 18px; display: flex; align-items: center; gap: 5px; padding: 0 4px 0 5px; margin: 1px 20px 0 0; background: #f0f0f0; }
.hscroll svg { width: 6px; height: 10px; stroke: #555; stroke-width: 2; }
.hscroll svg:last-child { margin-left: auto; }
.hscroll .thumb { width: 17px; height: 17px; background: #cdcdcd; }

.statusbar { height: 22px; display: flex; align-items: center; padding-left: 3px; background: #f0f0f0; }
.statusbar output { flex: 1; white-space: nowrap; }
.modes { display: flex; gap: 2px; }
.modes button { height: 18px; line-height: 15px; padding: 0 7px 0 2px; border: 1px solid transparent; white-space: nowrap; }
.modes .on { background: #d9ebf9; border-color: #2a7ac4; padding: 0 4px; }
.feedback { color: #00f; text-decoration: none; margin: 0 2px 0 4px; white-space: nowrap; line-height: 15px; }
.brand { height: 20px; width: 126px; display: flex; align-items: center; gap: 4px; padding-left: 11px; background: #fff; font-size: 13px; }
.brand svg { width: 18px; height: 16px; }
```
